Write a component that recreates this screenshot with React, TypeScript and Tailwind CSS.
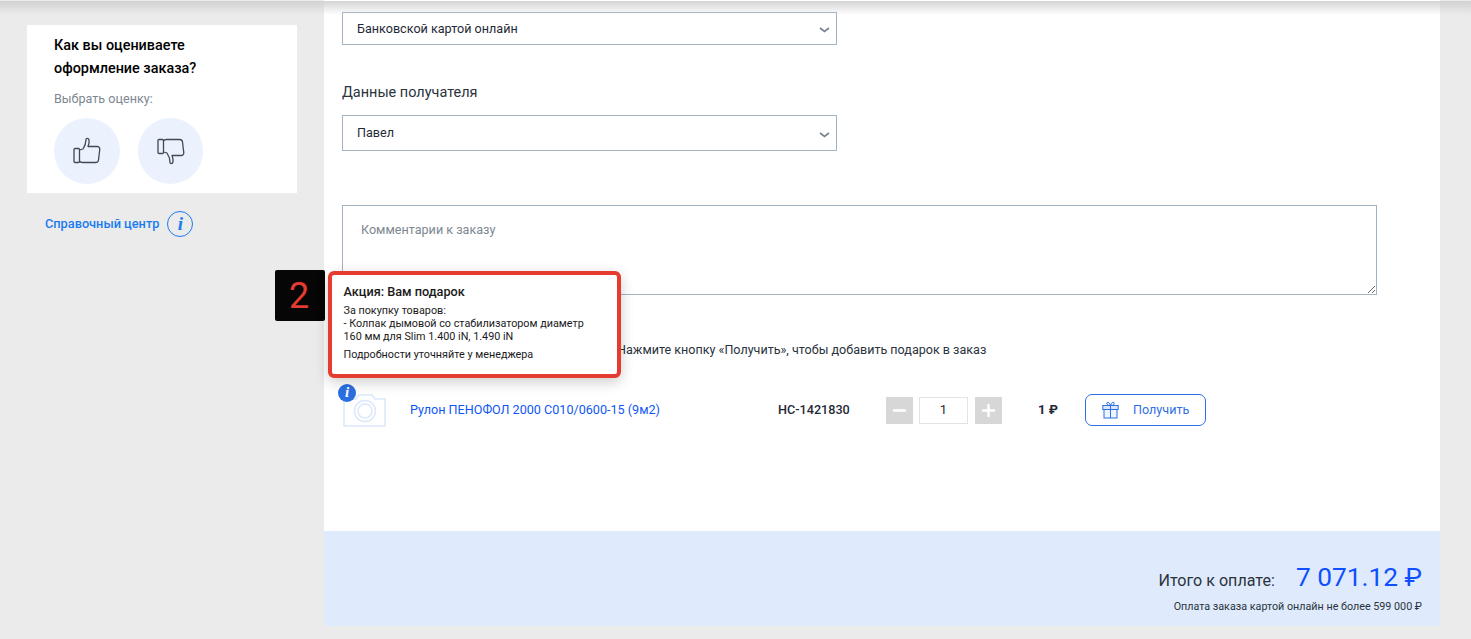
import { Minus, Plus } from "lucide-react";

function Select({ value, className }: { value: string; className: string }) {
  return (
    <div className={`w-[495px] border border-[#a3b3c2] flex items-center justify-between pl-[14px] pr-[6px] text-[12.6px] text-[#1f2a37] ${className}`}>
      <span className="pt-px">{value}</span>
      <svg width="11" height="6" viewBox="0 0 11 6" fill="none" stroke="#78828c" strokeWidth="1.6" className="mt-[3px]">
        <path d="M1 1 L5.5 4.5 L10 1" />
      </svg>
    </div>
  );
}

function ThumbUp() {
  return (
    <svg width="28" height="28" viewBox="0 0 28 28" fill="none" stroke="#3f4a55" strokeWidth="1.3" strokeLinejoin="round" strokeLinecap="round">
      <rect x="1" y="11.5" width="5.5" height="14" rx="1" />
      <path d="M6.5 13 L10 12 C12 9 13 6 13 2.5 C13 1.2 15.5 0.8 16 3 C16.6 5.5 15.8 7.5 15 9.5 H24.5 C26.5 9.5 27 11.5 26.7 13 L25.5 23 C25.3 24.8 24 25.5 22.5 25.5 H9.5 C8 25.5 7 25 6.5 24.2" />
    </svg>
  );
}

function ThumbDown() {
  return (
    <svg width="28" height="28" viewBox="0 0 28 28" fill="none" stroke="#3f4a55" strokeWidth="1.3" strokeLinejoin="round" strokeLinecap="round">
      <rect x="1" y="2.5" width="5.5" height="14" rx="1" />
      <path d="M6.5 15 L10 16 C12 19 13 22 13 25.5 C13 26.8 15.5 27.2 16 25 C16.6 22.5 15.8 20.5 15 18.5 H24.5 C26.5 18.5 27 16.5 26.7 15 L25.5 5 C25.3 3.2 24 2.5 22.5 2.5 H9.5 C8 2.5 7 3 6.5 3.8" />
    </svg>
  );
}

function CameraPlaceholder() {
  return (
    <svg width="43" height="33" viewBox="0 0 43 33" fill="none" stroke="#dbe8fb" strokeWidth="1.5">
      <path d="M1 5 H13 L16 1 H29 L32 5 H42 V32 H1 Z" strokeLinejoin="round" />
      <circle cx="22" cy="17" r="10.5" />
      <circle cx="22" cy="17" r="7" />
    </svg>
  );
}

function GiftIcon() {
  return (
    <svg width="17" height="18" viewBox="0 0 17 18" fill="none" stroke="#2f6fe4" strokeWidth="1">
      <rect x="0.8" y="4.5" width="15.4" height="4" fill="#dbe7fb" />
      <rect x="2" y="8.5" width="13" height="8.5" fill="#eef4fd" />
      <path d="M8.5 4.5 V17" />
      <path d="M8.5 4.5 C6 4.5 4.5 3.5 4.8 2 C5.2 0.5 7.5 1 8.5 4.5 C9.5 1 11.8 0.5 12.2 2 C12.5 3.5 11 4.5 8.5 4.5 Z" />
    </svg>
  );
}

export default function App() {
  return (
    <div className="relative h-[639px] overflow-hidden bg-[#ebebeb] font-['Roboto',sans-serif]">
      {/* Top shadow */}
      <div className="absolute top-[1px] left-0 right-0 h-[14px] z-10 pointer-events-none bg-gradient-to-b from-[#cfcfcf]/90 to-transparent" />

      <div className="flex pl-[27px]">
        {/* Sidebar */}
        <aside className="w-[270px] pt-[25px]">
          <div className="h-[168px] bg-white pl-[27px] pt-[9px]">
            <h3 className="text-[14.4px] leading-[23px] font-medium text-black">
              Как вы оцениваете
              <br />
              оформление заказа?
            </h3>
            <p className="mt-[11px] text-[12.6px] leading-[16px] text-[#7d8791]">Выбрать оценку:</p>
            <div className="mt-[11px] flex gap-[18px]">
              <button className="w-[66px] h-[66px] rounded-full bg-[#ebf2fd] flex items-center justify-center">
                <ThumbUp />
              </button>
              <button className="w-[65px] h-[66px] rounded-full bg-[#ebf2fd] flex items-center justify-center">
                <ThumbDown />
              </button>
            </div>
          </div>
          <div className="mt-[18px] ml-[18px] flex items-center gap-[8px]">
            <span className="text-[12.75px] font-medium text-[#1a7cf0]">Справочный центр</span>
            <span className="w-[26px] h-[26px] rounded-full border-[1.5px] border-[#1a7cf0] flex items-center justify-center text-[#1a7cf0] text-[19px] italic font-bold font-['Liberation_Serif',serif]">
              i
            </span>
          </div>
        </aside>

        {/* Main column */}
        <main className="ml-[27px] w-[1116px]">
          <div className="h-[531px] bg-white pl-[18px] pt-[12px]">
            <Select value="Банковской картой онлайн" className="h-[33px]" />
            <h4 className="mt-[39px] text-[14.46px] leading-[18px] text-[#2a333c]">Данные получателя</h4>
            <Select value="Павел" className="h-[36px] mt-[13px]" />
            <textarea
              readOnly
              placeholder="Комментарии к заказу"
              className="mt-[54px] block w-[1035px] h-[90px] border border-[#a3b3c2] px-[18px] py-[15px] text-[12.6px] placeholder:text-[#7d8791] outline-none"
            />
            <p className="mt-[47px] pl-[275px] text-[12.56px] leading-[16px] text-[#2a333c]">
              Нажмите кнопку «Получить», чтобы добавить подарок в заказ
            </p>

            {/* Gift row */}
            <div className="mt-[33px] flex items-center h-[38px]">
              <div className="relative w-[68px]">
                <div className="pl-px">
                  <CameraPlaceholder />
                </div>
                <span className="absolute -left-[4px] -top-[10px] w-[18px] h-[18px] rounded-full bg-[#2a6fe0] text-white flex items-center justify-center text-[15px] italic font-bold font-['Liberation_Serif',serif]">
                  i
                </span>
              </div>
              <a className="w-[368px] text-[12.6px] text-[#0f57f5]">Рулон ПЕНОФОЛ 2000 С010/0600-15 (9м2)</a>
              <span className="w-[108px] text-[12.65px] font-medium text-[#1f2a37]">НС-1421830</span>
              <div className="flex items-center">
                <span className="w-[27px] h-[27px] bg-[#d7d7d7] flex items-center justify-center text-white">
                  <Minus size={19} strokeWidth={3} />
                </span>
                <span className="ml-[6px] w-[49px] h-[27px] border border-[#e3e3e3] flex items-center justify-center text-[13px] text-[#1f2a37]">
                  1
                </span>
                <span className="ml-[7px] w-[27px] h-[27px] bg-[#d7d7d7] flex items-center justify-center text-white">
                  <Plus size={19} strokeWidth={3} />
                </span>
              </div>
              <span className="ml-[36px] w-[47px] text-[13px] font-bold text-[#1f2a37]">1 ₽</span>
              <button className="w-[121px] h-[32px] rounded-[7px] border border-[#2f6fe4] flex items-center pl-[16px] gap-[14px] text-[12.6px] text-[#2f6fe4]">
                <GiftIcon />
                Получить
              </button>
            </div>
          </div>

          {/* Total */}
          <div className="h-[95px] bg-[#dfebfd] pr-[18px] pt-[29px] flex flex-col items-end">
            <div className="flex items-baseline">
              <span className="text-[16.1px] text-[#2a333c]">Итого к оплате:</span>
              <span className="ml-[21px] text-[26.3px] leading-[34px] text-[#0f4fff]">7 071.12 ₽</span>
            </div>
            <p className="mt-[6px] text-[10.75px] leading-[14px] text-[#2a333c]">Оплата заказа картой онлайн не более 599 000 ₽</p>
          </div>
        </main>
      </div>

      {/* Step badge */}
      <div className="absolute left-[275px] top-[270px] w-[50px] h-[51px] bg-[#060606] rounded-[2px] flex items-center justify-center text-[36px] text-[#e53b30] pr-[2px] z-20">
        2
      </div>

      {/* Tooltip */}
      <div className="absolute left-[328px] top-[271px] w-[293px] h-[107px] rounded-[6px] border-[4.5px] border-[#e53b30] bg-white shadow-[0_4px_14px_rgba(0,0,0,0.2)] pl-[11.5px] pt-[8.5px] z-20 text-[#1a1a1a]">
        <p className="text-[12.7px] leading-[16px] font-medium">Акция: Вам подарок</p>
        <p className="mt-[3px] text-[10.8px] leading-[13px] pt-px">
          За покупку товаров:
          <br />- Колпак дымовой со стабилизатором диаметр
          <br />
          160 мм для Slim 1.400 iN, 1.490 iN
        </p>
        <p className="mt-[5px] text-[10.8px] leading-[13px]">Подробности уточняйте у менеджера</p>
      </div>
    </div>
  );
}
